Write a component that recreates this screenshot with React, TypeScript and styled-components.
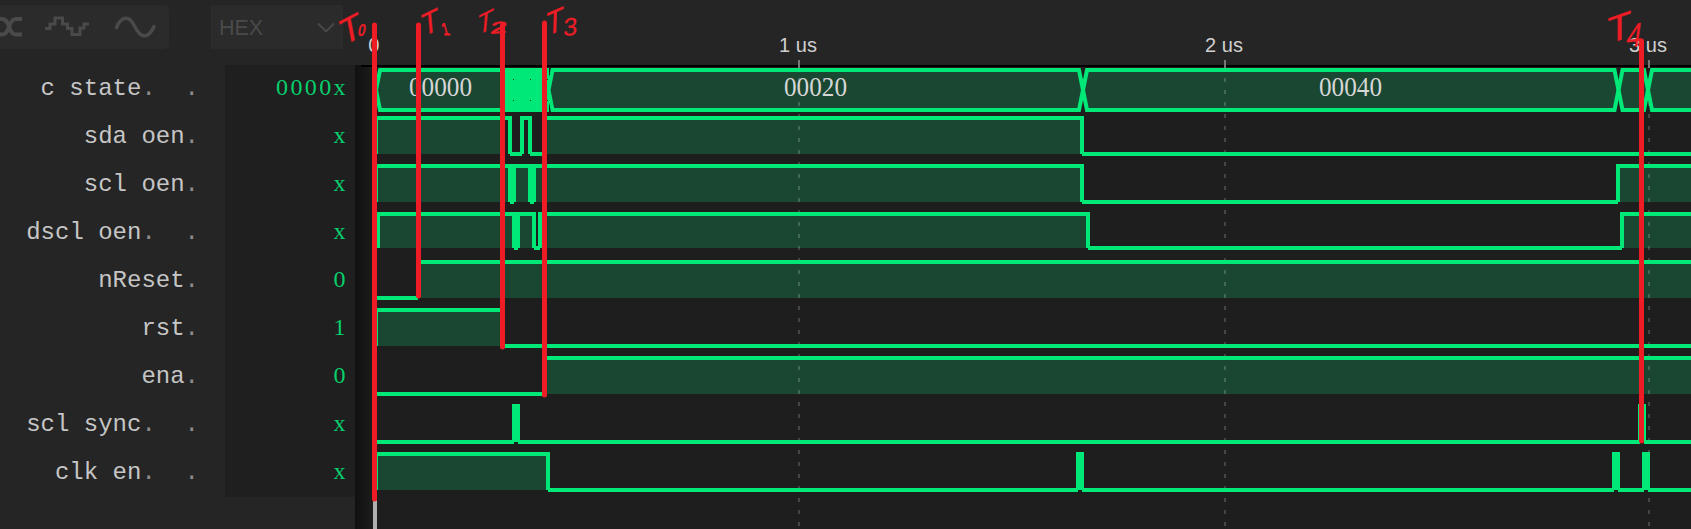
import React from "react";
import styled, { createGlobalStyle } from "styled-components";

const GREEN = "#00e878";
const FILL = "#1a4731";
const RED = "#ee1c25";

const GlobalStyle = createGlobalStyle`
  html, body { margin: 0; background: #1e1e1e; }
`;

const Viewer = styled.main`
  display: grid;
  grid-template-columns: 225px 130px 1336px;
  grid-template-rows: 65px 464px;
  width: 1691px;
  height: 529px;
  overflow: hidden;
  background: #252525;
  position: relative;
`;

const Toolbar = styled.header`
  grid-column: 1 / 3;
  display: flex;
  gap: 42px;
  padding-top: 5px;
  height: 44px;
`;

const IconGroup = styled.div`
  width: 169px;
  height: 44px;
  background: #2b2b2b;
  border-radius: 0 5px 5px 0;
`;

const FormatSelect = styled.div`
  display: flex;
  align-items: center;
  justify-content: space-between;
  box-sizing: border-box;
  width: 132px;
  height: 44px;
  padding: 2px 8px 0 8px;
  background: #2b2b2b;
  color: #4a4a4a;
  font: 21.5px "Liberation Sans", Arial, sans-serif;
`;

const Ruler = styled.div`
  height: 65px;
`;

const Names = styled.div`
  display: flex;
  flex-direction: column;
  padding-right: 26px;
`;

const Name = styled.div`
  height: 48px;
  line-height: 47px;
  text-align: right;
  white-space: pre;
  font-family: "Liberation Mono", monospace;
  font-size: 24px;
  color: #c6c6c6;
`;

const Dots = styled.span`
  color: #8c8c8c;
`;

const Values = styled.div`
  height: 432px;
  background: #1f1f1f;
`;

const Value = styled.div`
  height: 48px;
  line-height: 45px;
  padding-right: 7px;
  text-align: right;
  font-family: "Liberation Serif", serif;
  font-size: 24px;
  letter-spacing: 2.4px;
  color: #06cf6c;
`;

const Chart = styled.div`
  background: linear-gradient(90deg, #101010 0, #1e1e1e 20px);
`;

const Overlay = styled.svg`
  position: absolute;
  left: 0;
  top: 0;
  pointer-events: none;
`;

const rows = [
  { name: "c state", dots: ".  .", value: "0000x" },
  { name: "sda oen", dots: ".", value: "x" },
  { name: "scl oen", dots: ".", value: "x" },
  { name: "dscl oen", dots: ".  .", value: "x" },
  { name: "nReset", dots: ".", value: "0" },
  { name: "rst", dots: ".", value: "1" },
  { name: "ena", dots: ".", value: "0" },
  { name: "scl sync", dots: ".  .", value: "x" },
  { name: "clk en", dots: ".  .", value: "x" },
];

type Signal = { hi: number; lo: number; start: 0 | 1; x0?: number; edges: number[]; hollow?: boolean };

const signals: Signal[] = [
  { hi: 118, lo: 154, start: 1, edges: [510, 522, 530, 544, 1082], hollow: true },
  { hi: 166, lo: 202, start: 1, edges: [510, 514, 530, 534, 1082, 1618] },
  { hi: 214, lo: 248, start: 1, x0: 378, edges: [514, 518, 534, 540, 1088, 1622] },
  { hi: 262, lo: 298, start: 0, edges: [418] },
  { hi: 310, lo: 346, start: 1, edges: [502] },
  { hi: 358, lo: 394, start: 0, edges: [544] },
  { hi: 406, lo: 442, start: 0, edges: [514, 518, 1640, 1644] },
  { hi: 454, lo: 490, start: 1, edges: [548, 1078, 1082, 1614, 1618, 1644, 1648] },
];

const spans = (s: Signal) => {
  const xs = [s.x0 ?? 376, ...s.edges, 1700];
  return xs.slice(0, -1).map((a, i) => ({ a, b: xs[i + 1], high: (i + s.start) % 2 === 1 }));
};

const SignalFill = ({ s }: { s: Signal }) => (
  <>
    {spans(s).filter((p) => p.high && !(s.hollow && p.b === 530)).map((p) => (
      <rect key={p.a} x={p.a} y={s.hi} width={(s.hollow && p.b === 510 ? 502 : p.b) - p.a} height={s.lo - s.hi} fill={FILL} />
    ))}
  </>
);

const SignalLine = ({ s }: { s: Signal }) => {
  const verticals = s.start ? [s.x0 ?? 376, ...s.edges] : s.edges;
  return (
    <g fill={GREEN}>
      {spans(s).map((p) =>
        p.high ? (
          <rect key={p.a} x={p.a - 2} y={s.hi - 2} width={p.b - p.a + 4} height={4} />
        ) : (
          <rect key={p.a} x={p.a} y={s.lo - 2} width={p.b - p.a} height={4} />
        )
      )}
      {verticals.map((x) => (
        <rect key={`v${x}`} x={x - 2} y={s.hi - 2} width={4} height={s.lo - s.hi + 2} />
      ))}
    </g>
  );
};

const buses = [
  [376, 506],
  [548.5, 1083],
  [1083, 1618.5],
  [1618.5, 1648],
  [1648, 1720],
];
const hex = ([a, b]: number[]) => `M${a} 90L${a + 4} 70H${b - 4}L${b} 90L${b - 4} 110H${a + 4}Z`;

const busLabels = [
  { x: 440.5, t: "00000" },
  { x: 815.5, t: "00020" },
  { x: 1350.5, t: "00040" },
];

const ticks = [
  { x: 799, t: "1 us" },
  { x: 1225, t: "2 us" },
  { x: 1649, t: "3 us" },
];

const markers = [
  { x: 374.5, y1: 25, y2: 499 },
  { x: 418.5, y1: 25, y2: 296 },
  { x: 502.5, y1: 25, y2: 347 },
  { x: 544.5, y1: 23, y2: 395 },
  { x: 1641.5, y1: 41, y2: 441 },
];

// Each glyph is slanted by its own matrix so the labels look jotted by hand.
const notes = [
  { c: "T", m: "0.95 -0.5 0.19 1.0 353 41", s: 35 },
  { c: "0", m: "0.8 -0.1 -0.15 1 361 35.5", s: 16 },
  { c: "T", m: "0.85 -0.42 0.08 0.95 431 33", s: 33 },
  { c: "1", m: "0.7 0 0.3 1 447 34.5", s: 17 },
  { c: "T", m: "0.85 -0.42 -0.09 0.98 484.5 32", s: 30 },
  { c: "2", m: "1.8 -0.1 -0.15 1 498 33", s: 16 },
  { c: "T", m: "0.95 -0.42 -0.04 1.12 554.5 33", s: 30 },
  { c: "3", m: "1 -0.12 -0.05 1 570 35.5", s: 25 },
  { c: "T", m: "1.15 -0.4 0 1.1 1619.5 40", s: 34 },
  { c: "4", m: "0.9 -0.1 -0.15 1.1 1633 47", s: 31 },
];

export default function App() {
  return (
    <Viewer>
      <GlobalStyle />
      <Toolbar>
        <IconGroup>
          <svg width="169" height="44" fill="none" stroke="#4a4a4a" strokeWidth="4">
            <path d="M-1 14h3c3.500 0 4.500 2 6 5l2 5c1.500 4 3 5.500 6 5.500h6M-1 29.500h3c3.500 0 4.500-2 6-5l2-5c1.500-4 3-5.500 6-5.500h6" />
            <path d="M45 23.500h5v-4.500h5v-6h7.500v6h5v4.500h4.500v6h8v-6.500h4v-4h5" strokeWidth="3" />
            <path d="M116.500 22.500C121 11.500 129 9.500 134.500 21C140.500 33.500 148 34.500 154 21.500" strokeLinecap="round" strokeWidth="3.500" />
          </svg>
        </IconGroup>
        <FormatSelect>
          HEX
          <svg width="18" height="12" fill="none" stroke="#4a4a4a" strokeWidth="1.8">
            <path d="M1 1.500l8 8 8-8" />
          </svg>
        </FormatSelect>
      </Toolbar>
      <Ruler />
      <Names>
        {rows.map((r) => (
          <Name key={r.name}>
            {r.name}
            <Dots>{r.dots}</Dots>
          </Name>
        ))}
      </Names>
      <Values>
        {rows.map((r) => (
          <Value key={r.name}>{r.value}</Value>
        ))}
      </Values>
      <Chart />
      <Overlay width="1691" height="529">
        <rect x="361" y="65" width="1330" height="2" fill="#000" />
        {signals.map((s) => (
          <SignalFill key={s.hi} s={s} />
        ))}
        {buses.map((b) => (
          <path key={b[0]} d={hex(b)} fill={FILL} />
        ))}
        {ticks.map(({ x, t }) => (
          <g key={t}>
            <path d={`M${x} 78V529`} stroke="#fff" strokeOpacity="0.18" strokeWidth="2" strokeDasharray="4 8" />
            <path d={`M${x} 60V68`} stroke="#777" strokeWidth="2" />
          </g>
        ))}
        {buses.map((b) => (
          <path key={b[0]} d={hex(b)} fill="none" stroke={GREEN} strokeWidth="4" />
        ))}
        <rect x="500" y="68" width="49" height="44" fill={GREEN} />
        {[[513, 79], [530, 79], [513, 100], [530, 100], [547, 79], [547, 100], [549, 69], [549, 74], [549, 105], [549, 110]].map(([x, y]) => (
          <rect key={`${x}-${y}`} x={x} y={y} width="1" height="1" fill="#0b3a22" />
        ))}
        {signals.map((s) => (
          <SignalLine key={s.hi} s={s} />
        ))}
        <g fill="#d6d6d6" fontFamily='"Liberation Serif", serif' fontSize="27.5" textAnchor="middle">
          {busLabels.map(({ x, t }) => (
            <text key={t} x={x} y="96" textLength="63" lengthAdjust="spacingAndGlyphs">{t}</text>
          ))}
        </g>
        <g fill="#d0d0d0" fontFamily='"Liberation Sans", Arial, sans-serif' fontSize="20" textAnchor="middle">
          <text x="373.7" y="52">0</text>
          {ticks.map(({ x, t }) => (
            <text key={t} x={x - 1} y="52">{t}</text>
          ))}
        </g>
        <path d="M375 500V529" stroke="#b0b0b0" strokeWidth="4" />
        <g stroke={RED} strokeWidth="5" strokeLinecap="round">
          {markers.map((m) => (
            <path key={m.x} d={`M${m.x} ${m.y1}V${m.y2}`} />
          ))}
        </g>
        <g fill={RED} fontFamily='"Liberation Sans", Arial, sans-serif' textAnchor="middle">
          {notes.map((n) => (
            <text key={n.m} transform={`matrix(${n.m})`} fontSize={n.s} stroke={RED} strokeWidth={n.s < 20 ? 0.8 : 0.2}>{n.c}</text>
          ))}
        </g>
      </Overlay>
    </Viewer>
  );
}
